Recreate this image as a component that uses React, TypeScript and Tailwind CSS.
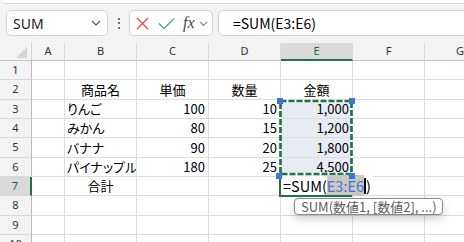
import React from "react";

const CELL_FONT = '"Noto Sans CJK JP", "Noto Sans", sans-serif';
const UI_FONT = '"Noto Sans", "Noto Sans CJK JP", sans-serif';

type Cell = { t?: string; a?: "l" | "c" | "r"; sel?: boolean };

const rows: Cell[][] = [
  [{}, {}, {}, {}, {}, {}],
  [{}, { t: "商品名", a: "c" }, { t: "単価", a: "c" }, { t: "数量", a: "c" }, { t: "金額", a: "c" }, {}],
  [{}, { t: "りんご", a: "l" }, { t: "100", a: "r" }, { t: "10", a: "r" }, { t: "1,000", a: "r", sel: true }, {}],
  [{}, { t: "みかん", a: "l" }, { t: "80", a: "r" }, { t: "15", a: "r" }, { t: "1,200", a: "r", sel: true }, {}],
  [{}, { t: "バナナ", a: "l" }, { t: "90", a: "r" }, { t: "20", a: "r" }, { t: "1,800", a: "r", sel: true }, {}],
  [{}, { t: "パイナップル", a: "l" }, { t: "180", a: "r" }, { t: "25", a: "r" }, { t: "4,500", a: "r", sel: true }, {}],
  [{}, { t: "合計", a: "c" }, {}, {}, {}, {}],
  [{}, {}, {}, {}, {}, {}],
  [{}, {}, {}, {}, {}, {}],
  [{}, {}, {}, {}, {}, {}],
];

const widths = ["w-[33px]", "w-[72px]", "w-[72px]", "w-[72px]", "w-[72px]", "w-[72px]"];
const letters = ["A", "B", "C", "D", "E", "F"];

function CellView({ c, w }: { c: Cell; w: string }) {
  const align =
    c.a === "c" ? "justify-center" : c.a === "r" ? "justify-end pr-[3px]" : "justify-start pl-[2px]";
  return (
    <div
      className={`${w} shrink-0 h-full flex items-center whitespace-nowrap overflow-hidden border-r border-b border-[#dcdcdc] text-[13px] text-black ${align} ${
        c.sel ? "bg-[#e6ecf2]" : "bg-white"
      }`}
      style={{ fontFeatureSettings: '"palt"' }}
    >
      {c.t}
    </div>
  );
}

export default function App() {
  return (
    <div
      className="relative w-[464px] h-[242px] overflow-hidden bg-[#f3f3f3]"
      style={{ fontFamily: CELL_FONT }}
    >
      {/* ribbon edge */}
      <div className="h-[4px] ml-[2px] bg-white rounded-bl-[5px] border-b border-[#d9d9d9]" />

      {/* formula bar */}
      <div className="flex items-center h-[26px] mt-[6px] mb-[7px]">
        <div className="ml-[6px] w-[102px] h-[26px] bg-white border border-[#d4d4d4] rounded-[5px] flex items-center justify-between pl-[6px] pr-[6px]">
          <span className="text-[14px] text-[#222]" style={{ fontFamily: UI_FONT }}>
            SUM
          </span>
          <svg width="10" height="6" viewBox="0 0 10 6">
            <path d="M1 1 L5 5 L9 1" fill="none" stroke="#555" strokeWidth="1.1" />
          </svg>
        </div>
        <div className="w-[21px] flex flex-col items-center justify-center gap-[2.5px]">
          <div className="w-[2px] h-[2px] bg-[#444] rounded-full" />
          <div className="w-[2px] h-[2px] bg-[#444] rounded-full" />
          <div className="w-[2px] h-[2px] bg-[#444] rounded-full" />
        </div>
        <div className="w-[84px] h-[26px] bg-white border border-[#d4d4d4] rounded-[5px] flex items-center pl-[5px]">
          <svg width="13" height="13" viewBox="0 0 13 13" className="ml-[1px]">
            <path d="M1 1 L12 12 M12 1 L1 12" stroke="#e8484f" strokeWidth="1.3" />
          </svg>
          <svg width="17" height="13" viewBox="0 0 17 13" className="ml-[9px]">
            <path d="M1 6.5 L6 11.5 L16 1.5" fill="none" stroke="#4caa7a" strokeWidth="1.3" />
          </svg>
          <span
            className="ml-[8px] text-[16px] italic text-[#444] leading-none"
            style={{ fontFamily: '"Liberation Serif", serif' }}
          >
            fx
          </span>
          <svg width="9" height="6" viewBox="0 0 9 6" className="ml-[4px] mt-[1px]">
            <path d="M1 1 L4.5 4.5 L8 1" fill="none" stroke="#888" strokeWidth="1.1" />
          </svg>
        </div>
        <div className="ml-[5px] flex-1 -mr-[8px] h-[26px] bg-white border border-[#d4d4d4] rounded-[5px] flex items-center pl-[14px]">
          <span className="text-[14px] text-black">=SUM(E3:E6)</span>
        </div>
      </div>

      {/* column headers */}
      <div className="flex h-[18px] border-b border-[#c4c4c4]" style={{ fontFamily: UI_FONT }}>
        <div className="relative w-[32px] shrink-0 border-r border-[#d2d2d2]">
          <svg width="12" height="12" viewBox="0 0 12 12" className="absolute left-[16px] top-[4px]">
            <path d="M11 0 L11 11 L0 11 Z" fill="#d6d6d6" />
          </svg>
        </div>
        {letters.map((l, i) => (
          <div
            key={l}
            className={`${widths[i]} shrink-0 flex items-center justify-center text-[11px] border-r border-[#dadada] ${
              l === "E" ? "bg-[#d9d9d9] text-[#1e6b41] border-b-2 border-b-[#217346] -mb-[1px]" : "text-[#333]"
            }`}
          >
            {l}
          </div>
        ))}
        <div className="flex-1 flex items-center pl-[31px] text-[11px] text-[#333]">G</div>
      </div>

      {/* grid */}
      <div className="flex flex-col">
        {rows.map((r, ri) => (
          <div key={ri} className="flex h-[19.33px] shrink-0">
            <div
              className={`w-[32px] shrink-0 h-full flex items-center justify-center text-[11px] border-b border-[#d8d8d8] ${
                ri === 6
                  ? "bg-[#d9d9d9] text-[#1e6b41] border-r-2 border-r-[#217346]"
                  : "border-r border-r-[#b8b8b8] text-[#333]"
              }`}
              style={{ fontFamily: UI_FONT }}
            >
              {ri + 1}
            </div>
            {r.map((c, ci) => (
              <CellView key={ci} c={c} w={widths[ci]} />
            ))}
            <div className="flex-1 h-full bg-white border-b border-[#dcdcdc]" />
          </div>
        ))}
      </div>

      {/* reference marquee E3:E6 */}
      <svg
        className="absolute left-[276px] top-[96px]"
        width="80"
        height="84"
        viewBox="0 0 80 84"
      >
        <rect x="4.5" y="5" width="71" height="73" fill="none" stroke="#ffffff" strokeWidth="2.7" />
        <rect
          x="4.5"
          y="5"
          width="71"
          height="73"
          fill="none"
          stroke="#217346"
          strokeWidth="2.7"
          strokeDasharray="6 2"
        />
      </svg>

      {/* editing cell E7 */}
      <div className="absolute left-[281px] top-[176px] w-[92px] h-[19px] bg-white flex items-center pl-[2px] text-[14.5px] text-black whitespace-nowrap">
        <span>=SUM(</span>
        <span className="bg-[#c8c8c8] text-[#4a72c8]">E3:E6</span>
        <span className="w-[2px] h-[16px] bg-black" />
        <span>)</span>
      </div>
      <div className="absolute left-[279px] top-[176px] w-[2px] h-[21px] bg-[#217346]" />
      <div className="absolute left-[279px] top-[195px] w-[73px] h-[2px] bg-[#217346]" />

      {/* range handles */}
      <div className="absolute left-[277px] top-[98px] w-[6px] h-[6px] bg-[#3a78d4]" />
      <div className="absolute left-[349px] top-[98px] w-[6px] h-[6px] bg-[#3a78d4]" />
      <div className="absolute left-[276px] top-[173px] w-[6px] h-[6px] bg-[#3a78d4]" />
      <div className="absolute left-[349px] top-[173px] w-[6px] h-[6px] bg-[#3a78d4]" />

      {/* tooltip */}
      <div className="absolute left-[294px] top-[198px] w-[149px] h-[17px] bg-white border border-[#8a8a8a] rounded-[4px] shadow-[0_4px_8px_rgba(0,0,0,0.18)] flex items-center pl-[6px] text-[13px] text-[#5c5c5c] whitespace-nowrap">
        SUM(数値1, [数値2], ...)
      </div>
    </div>
  );
}
